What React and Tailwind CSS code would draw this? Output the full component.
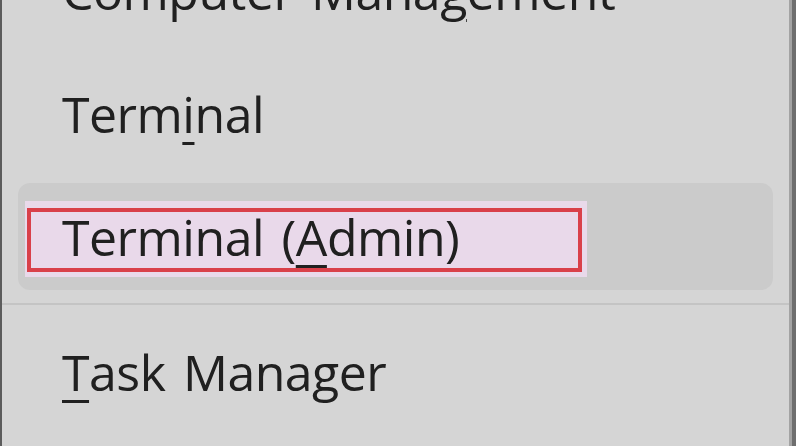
const items = [
  { before: 'Computer Mana', key: 'g', after: 'ement' },
  { before: 'Term', key: 'i', after: 'nal' },
  { before: 'Terminal (', key: 'A', after: 'dmin)', active: true },
];

const Label = ({ before, k, after }) => (
  <span className="whitespace-nowrap">
    {before}
    <span className="underline decoration-[3px] underline-offset-[9px]">{k}</span>
    {after}
  </span>
);

const MenuItem = ({ item }) => (
  <div
    className={`relative h-[107px] mx-[16px] rounded-[12px] flex items-center pl-[44px] ${
      item.active ? 'bg-[#cbcbcb]' : ''
    }`}
  >
    {item.active && (
      <div className="absolute left-[7px] top-[18px] w-[562px] h-[76px] bg-[#e9d9ea]">
        <div className="absolute left-[2px] top-[7px] w-[555px] h-[64px] border-[4px] border-[#d9404a]" />
      </div>
    )}
    <span className="relative">
      <Label before={item.before} k={item.key} after={item.after} />
    </span>
  </div>
);

export default function App() {
  return (
    <div
      className="w-[796px] h-[446px] overflow-hidden bg-[#d5d5d5] flex text-[#202020] text-[50px] leading-none tracking-[-0.5px] [word-spacing:5px]"
      style={{ fontFamily: '"Open Sans", "Noto Sans", sans-serif' }}
    >
      <div className="w-[2px] bg-[#5c5c5c]" />
      <div className="flex-1 flex flex-col -mt-[63px]">
        <div className="flex flex-col gap-[16px]">
          {items.map((item) => (
            <MenuItem key={item.before} item={item} />
          ))}
        </div>
        <div className="h-[2px] bg-[#c4c4c4] mt-[13px] mb-[13px]" />
        <div className="h-[107px] mx-[16px] flex items-center pl-[44px]">
          <Label before="" k="T" after="ask Manager" />
        </div>
      </div>
      <div className="w-[3px] bg-[#a3a3a3]" />
      <div className="w-[4px] bg-[#6e6e6e]" />
    </div>
  );
}
